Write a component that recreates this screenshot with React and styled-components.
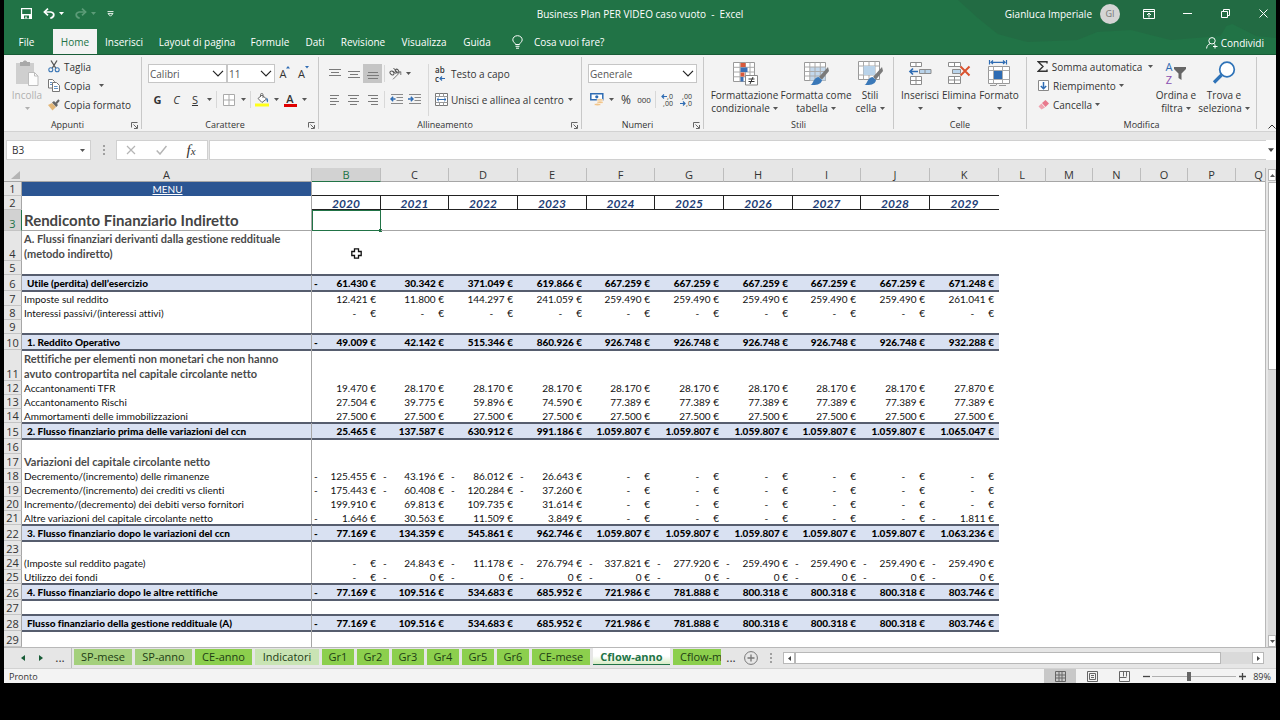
import { useState } from "react";
import styled, { createGlobalStyle, css } from "styled-components";

const yearLabels = ["2020", "2021", "2022", "2023", "2024", "2025", "2026", "2027", "2028", "2029"];

const letters = ["A", "B", "C", "D", "E", "F", "G", "H", "I", "J", "K", "L", "M", "N", "O", "P", "Q"];

const colWidths = [18, 290, 69, 68, 69, 69, 68, 69, 69, 68, 69, 69, 47, 47, 48, 47, 48];

// a leading "-" goes to the left edge of the cell, "z" is an empty amount
const rows = [
  { n: 1, h: 14, kind: "menu", label: "MENU" },
  { n: 2, h: 14, kind: "years" },
  { n: 3, h: 21, kind: "title", label: "Rendiconto Finanziario Indiretto" },
  { n: 4, h: 30, kind: "section", label: "A. Flussi finanziari derivanti dalla gestione reddituale (metodo indiretto)" },
  { n: 5, h: 14 },
  { n: 6, h: 16, kind: "total", label: "Utile (perdita) dell’esercizio", values: ["-61.430", "30.342", "371.049", "619.866", "667.259", "667.259", "667.259", "667.259", "667.259", "671.248"] },
  { n: 7, h: 15, label: "Imposte sul reddito", values: ["12.421", "11.800", "144.297", "241.059", "259.490", "259.490", "259.490", "259.490", "259.490", "261.041"] },
  { n: 8, h: 14, label: "Interessi passivi/(interessi attivi)", values: Array(10).fill("z") },
  { n: 9, h: 14 },
  { n: 10, h: 16, kind: "total", label: "1. Reddito Operativo", values: ["-49.009", "42.142", "515.346", "860.926", "926.748", "926.748", "926.748", "926.748", "926.748", "932.288"] },
  { n: 11, h: 31, kind: "section", label: "Rettifiche per elementi non monetari che non hanno avuto contropartita nel capitale circolante netto" },
  { n: 12, h: 14, label: "Accantonamenti TFR", values: ["19.470", "28.170", "28.170", "28.170", "28.170", "28.170", "28.170", "28.170", "28.170", "27.870"] },
  { n: 13, h: 14, label: "Accantonamento Rischi", values: ["27.504", "39.775", "59.896", "74.590", "77.389", "77.389", "77.389", "77.389", "77.389", "77.389"] },
  { n: 14, h: 14, label: "Ammortamenti delle immobilizzazioni", values: Array(10).fill("27.500") },
  { n: 15, h: 16, kind: "total", label: "2. Flusso finanziario prima delle variazioni del ccn", values: ["25.465", "137.587", "630.912", "991.186", "1.059.807", "1.059.807", "1.059.807", "1.059.807", "1.059.807", "1.065.047"] },
  { n: 16, h: 15 },
  { n: 17, h: 15, kind: "section", label: "Variazioni del capitale circolante netto" },
  { n: 18, h: 14, label: "Decremento/(incremento) delle rimanenze", values: ["-125.455", "-43.196", "-86.012", "-26.643", "z", "z", "z", "z", "z", "z"] },
  { n: 19, h: 14, label: "Decremento/(incremento) dei crediti vs clienti", values: ["-175.443", "-60.408", "-120.284", "-37.260", "z", "z", "z", "z", "z", "z"] },
  { n: 20, h: 14, label: "Incremento/(decremento) dei debiti verso fornitori", values: ["199.910", "69.813", "109.735", "31.614", "z", "z", "z", "z", "z", "z"] },
  { n: 21, h: 14, label: "Altre variazioni del capitale circolante netto", values: ["-1.646", "30.563", "11.509", "3.849", "z", "z", "z", "z", "z", "-1.811"] },
  { n: 22, h: 16, kind: "total", label: "3. Flusso finanziario dopo le variazioni del ccn", values: ["-77.169", "134.359", "545.861", "962.746", "1.059.807", "1.059.807", "1.059.807", "1.059.807", "1.059.807", "1.063.236"] },
  { n: 23, h: 15 },
  { n: 24, h: 14, label: "(Imposte sul reddito pagate)", values: ["z", "-24.843", "-11.178", "-276.794", "-337.821", "-277.920", "-259.490", "-259.490", "-259.490", "-259.490"] },
  { n: 25, h: 14, label: "Utilizzo dei fondi", values: ["z", "-0", "-0", "-0", "-0", "-0", "-0", "-0", "-0", "-0"] },
  { n: 26, h: 16, kind: "total", label: "4. Flusso finanziario dopo le altre rettifiche", values: ["-77.169", "109.516", "534.683", "685.952", "721.986", "781.888", "800.318", "800.318", "800.318", "803.746"] },
  { n: 27, h: 15 },
  { n: 28, h: 16, kind: "total", label: "Flusso finanziario della gestione reddituale (A)", values: ["-77.169", "109.516", "534.683", "685.952", "721.986", "781.888", "800.318", "800.318", "800.318", "803.746"] },
  { n: 29, h: 16 },
];

const sheets = [
  { name: "SP-mese", width: 58, color: "#a4d07c" },
  { name: "SP-anno", width: 57, color: "#a4d07c" },
  { name: "CE-anno", width: 57, color: "#8ccf4d" },
  { name: "Indicatori", width: 64, color: "#c9e4b4" },
  { name: "Gr1", width: 32, color: "#8ccf4d" },
  { name: "Gr2", width: 32, color: "#8ccf4d" },
  { name: "Gr3", width: 32, color: "#8ccf4d" },
  { name: "Gr4", width: 32, color: "#8ccf4d" },
  { name: "Gr5", width: 32, color: "#8ccf4d" },
  { name: "Gr6", width: 32, color: "#8ccf4d" },
  { name: "CE-mese", width: 58, color: "#8ccf4d" },
  { name: "Cflow-anno", width: 77, color: "#ffffff" },
  { name: "Cflow-m", width: 48, color: "#8ccf4d" },
];

const menuTabs = [
  { name: "File", width: 45 },
  { name: "Home", width: 44 },
  { name: "Inserisci", width: 54 },
  { name: "Layout di pagina", width: 92 },
  { name: "Formule", width: 54 },
  { name: "Dati", width: 36 },
  { name: "Revisione", width: 60 },
  { name: "Visualizza", width: 62 },
  { name: "Guida", width: 44 },
];

/* ---------- icons ---------- */

const Svg = ({ w = 14, h = 14, box, children }) => (
  <svg width={w} height={h} viewBox={box || `0 0 ${w} ${h}`} fill="none" aria-hidden="true">
    {children}
  </svg>
);

const Caret = ({ color = "#555" }) => (
  <Svg w={5} h={3}><path d="M0 0h5L2.500 3z" fill={color} /></Svg>
);

const Chevron = () => (
  <Svg w={12} h={7}><path d="M1 .8l5 5 5-5" stroke="#222" strokeWidth="1.2" /></Svg>
);

const Launcher = () => (
  <Svg w={7} h={7}>
    <path d="M.5 5.500v-5h6" stroke="#666" />
    <path d="M2.500 2.500L6 6M6.500 3v3.500H3" stroke="#666" />
  </Svg>
);

const SaveIcon = () => (
  <Svg w={11} h={11}>
    <path d="M.6.6h9.800v9.800H.6z" stroke="#fff" strokeWidth="1.2" />
    <path d="M.6 6h9.800v4.400H.6z" fill="#fff" />
    <path d="M3 7.500h5v3H3z" fill="#217346" />
    <path d="M4.300 8.500h1.400v2H4.300z" fill="#fff" />
  </Svg>
);

const UndoIcon = ({ flip, color }) => (
  <Svg w={12} h={11}>
    <g transform={flip ? "matrix(-1 0 0 1 12 0)" : undefined}>
      <path d="M1.500 4h6.200c4.200.6 4.200 5-.4 6.200" stroke={color} strokeWidth="1.700" />
      <path d="M5 .6L1.400 4 5 7.400" stroke={color} strokeWidth="1.700" />
    </g>
  </Svg>
);

const CustomizeIcon = () => (
  <Svg w={7} h={6}><path d="M.5.6h6M1 2.600h5L3.500 5.200z" stroke="#fff" strokeWidth=".9" /></Svg>
);

const BulbIcon = () => (
  <Svg w={11} h={14}>
    <path d="M3.500 9.500C3.400 8 .8 7 .8 4.900.8 2.500 2.800.7 5.500.7s4.700 1.800 4.700 4.200c0 2.100-2.600 3.100-2.700 4.600z" stroke="#fff" />
    <path d="M3.500 11.300h4M4 13.200h3" stroke="#fff" />
  </Svg>
);

const RibbonOptionsIcon = () => (
  <Svg w={12} h={10}>
    <path d="M.5.5h11v9H.5zM.5 2.500h11M6 8.500V4.300M4 6l2-2 2 2" stroke="#fff" />
  </Svg>
);

const RestoreIcon = () => (
  <Svg w={9} h={9}><path d="M.5 2.500h6v6h-6zM2.500 2.500v-2h6v6h-2" stroke="#fff" /></Svg>
);

const CloseIcon = () => (
  <Svg w={9} h={9}><path d="M.5.5l8 8M8.500.5l-8 8" stroke="#fff" /></Svg>
);

const PersonIcon = () => (
  <Svg w={12} h={12}>
    <circle cx="6" cy="3.800" r="3.200" stroke="#fff" />
    <path d="M.6 11.500c.2-2.600 1.500-4.200 3.600-4.800M7.800 6.700l1 .5M9 7.500v4M7 9.500h4.500" stroke="#fff" />
  </Svg>
);

const PasteIcon = () => (
  <Svg w={24} h={27}>
    <path d="M1 3h18v21H1z" fill="#cfcfcf" />
    <path d="M5 2h3c0-2 4-2 4 0h3v4H5z" fill="#a9a9a9" />
    <path d="M13.500 12.500h6l3.500 3.500v9.500h-9.500z" fill="#fdfdfd" stroke="#bdbdbd" />
    <path d="M19.500 12.500V16H23" stroke="#bdbdbd" />
  </Svg>
);

const CutIcon = () => (
  <Svg w={12} h={13}>
    <path d="M3 .5l5 8M9 .5l-5 8" stroke="#555" strokeWidth="1.300" />
    <circle cx="2.800" cy="9.800" r="2" stroke="#3a76b5" strokeWidth="1.100" />
    <circle cx="9.200" cy="9.800" r="2" stroke="#3a76b5" strokeWidth="1.100" />
  </Svg>
);

const CopyIcon = () => (
  <Svg w={12} h={13}>
    <path d="M.5.5h4l2 2v6.500h-6z" fill="#fff" stroke="#777" />
    <path d="M4.500 3.500h4l3 3v6h-7z" fill="#fff" stroke="#777" />
    <path d="M6 7.500h3.500M6 9.500h4M2 3.500h2M2 5.500h2" stroke="#3a76b5" strokeWidth=".8" />
  </Svg>
);

const BrushIcon = () => (
  <Svg w={12} h={12}>
    <path d="M0 6l4-2 4 4-3.500 3.500z" fill="#e3b778" />
    <path d="M4 3.500L6 2l4 4-1.700 2z" fill="#666" />
    <path d="M8 4.500L11 1" stroke="#666" strokeWidth="2" />
  </Svg>
);

const SizeMark = ({ down }) => (
  <Svg w={4} h={3}><path d={down ? "M0 0h4L2 2.500z" : "M0 2.500h4L2 0z"} fill="#2f6cb3" /></Svg>
);

const BordersIcon = () => (
  <Svg w={12} h={12}>
    <path d="M.5.5h11v11H.5z" fill="#fff" stroke="#aaa" />
    <path d="M6 0v12M0 6h12" stroke="#aaa" />
  </Svg>
);

const FillIcon = () => (
  <Svg w={14} h={14}>
    <path d="M3 5.500l4-3.500 4.500 4L7 9.500z" fill="#fff" stroke="#666" />
    <path d="M5.500 4V1.500c0-1.500 2.500-1.500 2.500 0V5" stroke="#666" strokeWidth=".9" />
    <path d="M11.500 4.500c1.700 1 2 3 1.200 5C11.500 9 11.200 7 11.500 4.500z" fill="#3a76b5" />
    <path d="M0 10.500h14v3H0z" fill="#ffff1a" />
  </Svg>
);

const FontColorBar = () => (
  <Svg w={13} h={3}><path d="M0 0h13v3H0z" fill="#e00000" /></Svg>
);

const Lines = ({ spans }) => (
  <Svg w={12} h={12}>
    {spans.map(([x, y, w]) => <path key={y} d={`M${x} ${y}.5h${w}`} stroke="#7a7a7a" />)}
  </Svg>
);

const OrientIcon = () => (
  <Svg w={13} h={13}>
    <ellipse cx="3" cy="6" rx="1.700" ry="2.200" transform="rotate(-45 3 6)" stroke="#555" />
    <path d="M4 3.800l3 3M4.500 1l4 4.500" stroke="#555" />
    <ellipse cx="8" cy="4" rx="1.500" ry="2" transform="rotate(-45 8 4)" stroke="#555" />
    <path d="M4 12.300l7.500-7.500M8.500 4.800h3.300v3.200" stroke="#777" />
  </Svg>
);

const IndentIcon = ({ right }) => (
  <Svg w={13} h={11}>
    <path d="M1 .5h12M6.500 3.500H13M6.500 6.500H13M1 9.500h12" stroke="#8a8a8a" />
    {right
      ? <path d="M0 5h4.500M2.800 2.800L5 5 2.800 7.200" stroke="#2f6cb3" strokeWidth="1.400" />
      : <path d="M1 5h4.500M3.200 2.800L1 5l2.200 2.200" stroke="#2f6cb3" strokeWidth="1.400" />}
  </Svg>
);

const MergeIcon = () => (
  <Svg w={13} h={13}>
    <path d="M.5.5h12v12H.5z" fill="#fff" stroke="#777" />
    <path d="M.5 3.500h12M.5 9.500h12M4.500.5v3M8.500.5v3M4.500 9.500v3M8.500 9.500v3" stroke="#999" />
    <path d="M2 6.500h9M3.800 4.800L2 6.500l1.800 1.700M9.200 4.800L11 6.500 9.200 8.200" stroke="#2f6cb3" />
  </Svg>
);

const CurrencyIcon = () => (
  <Svg w={14} h={13}>
    <path d="M.8.8h12v6H.8z" fill="#fff" stroke="#2f6cb3" strokeWidth="1.500" />
    <circle cx="6.800" cy="3.800" r="1.600" fill="#2f6cb3" />
    <ellipse cx="10" cy="7" rx="3.200" ry="1.300" fill="#f0c48a" stroke="#fff" strokeWidth=".5" />
    <ellipse cx="10" cy="9.300" rx="3.200" ry="1.300" fill="#f0c48a" stroke="#fff" strokeWidth=".5" />
    <ellipse cx="7.500" cy="11.500" rx="3.200" ry="1.300" fill="#f0c48a" stroke="#fff" strokeWidth=".5" />
  </Svg>
);

const ArrowMini = ({ right }) => (
  <Svg w={6} h={5}>
    <path d={right ? "M0 2.500h5M3 .5l2 2-2 2" : "M6 2.500H1M3 .5l-2 2 2 2"} stroke="#2f6cb3" strokeWidth="1.200" />
  </Svg>
);

const CondIcon = () => (
  <Svg w={26} h={25}>
    <path d="M1.500 1.500h21v19h-21z" fill="#fff" stroke="#999" />
    <path d="M1.500 6.300h21M1.500 11h21M1.500 15.800h21M8 1.500v19M13.500 1.500v19M18 1.500v19" stroke="#aaa" />
    <path d="M8.500 2h5v4h-5zM8.500 11.500h4v4h-4z" fill="#d9583b" />
    <path d="M8.500 6.500h7v4.500h-7z" fill="#3a6fb5" />
    <path d="M8.500 16h3v4.500h-3z" fill="#3a6fb5" />
    <path d="M13.500 14.500h12v9.500h-12z" fill="#fff" stroke="#888" />
    <path d="M16.500 18h6M16.500 20.500h6M21 16l-3 7" stroke="#333" />
  </Svg>
);

const BrushBig = () => (
  <>
    <path d="M25 6l-9 10 3 2.500L26 10z" fill="#7a7a7a" />
    <path d="M15.500 16l3.500 3c-.5 4-5 5.500-11.500 5 3-1 2.500-7 8-8z" fill="#3a78b8" />
  </>
);

const TableIcon = () => (
  <Svg w={26} h={25}>
    <path d="M1.500 1.500h21v18h-21z" fill="#fff" stroke="#999" />
    <path d="M7 6h15.500v13.500H7z" fill="#c3d8ec" />
    <path d="M1.500 6h21M1.500 10.500h21M1.500 15h21M6.800 1.500v18M12 1.500v18M17.300 1.500v18" stroke="#aaa" />
    <BrushBig />
  </Svg>
);

const StylesIcon = () => (
  <Svg w={26} h={25}>
    <path d="M1.500.5h21v18h-21z" fill="#fff" stroke="#999" />
    <path d="M1.500 5h21M1.500 14h21M6.500.5v18M12 .5V5M18 .5v18M12 14v4" stroke="#aaa" />
    <path d="M6.500 5H18v9H6.500z" fill="#b9d3ea" />
    <BrushBig />
  </Svg>
);

const InsertIcon = () => (
  <Svg w={24} h={25}>
    <path d="M2.500 1.500h11v4h-11zM8 1.500v4M2.500 15.500h11v8h-11zM8 15.500v8M2.500 19.500h11" fill="#fff" stroke="#8c8c8c" />
    <path d="M11.500 8.500h11.500v4H11.500zM17 8.500v4" fill="#b9d3ea" stroke="#8c8c8c" />
    <path d="M10 10.500H2M5 7.500l-3 3 3 3" stroke="#2f6cb3" strokeWidth="1.700" />
  </Svg>
);

const DeleteIcon = () => (
  <Svg w={24} h={25}>
    <path d="M1.500 1.500h12v4h-12zM7.500 1.500v4M1.500 15.500h12v7h-12zM7.500 15.500v7M1.500 19h12" fill="#fff" stroke="#8c8c8c" />
    <path d="M5.500 8.500h8v4h-8z" fill="#b9d3ea" stroke="#8c8c8c" />
    <path d="M13.500 5.500l9 9M22.500 5.500l-9 9" stroke="#d9532f" strokeWidth="2" />
  </Svg>
);

const FormatIcon = () => (
  <Svg w={24} h={26}>
    <path d="M2.500 0v4.500M19.500 0v4.500M3.500 2.300h15M6 .5L4 2.300 6 4M16 .5l2 1.800L16 4" stroke="#2f6cb3" strokeWidth="1.200" />
    <path d="M1.500 6.500h21v17h-21z" fill="#fff" stroke="#999" />
    <path d="M1.500 10.500h21M1.500 19.500h21M6.500 6.500v17M15.500 6.500v17" stroke="#aaa" />
    <path d="M7 11h8v8H7z" fill="#2f6cb3" />
    <path d="M3 25.500h6l1-2M12 25.500h7" stroke="#999" />
  </Svg>
);

const SumIcon = () => (
  <Svg w={11} h={11}><path d="M10 2.500V.8H1.200L6 5.500 1.200 10.200H10V8.500" stroke="#333" strokeWidth="1.400" /></Svg>
);

const FillDownIcon = () => (
  <Svg w={11} h={11}>
    <path d="M.5.5h10v10H.5z" fill="#fff" stroke="#888" />
    <path d="M5.500 2v6.500M2.800 6l2.700 2.700L8.200 6" stroke="#2f6cb3" strokeWidth="1.500" />
  </Svg>
);

const EraserIcon = () => (
  <Svg w={11} h={10}>
    <path d="M4 3L7.500 0 11 3.500 7.500 7z" fill="#e8798d" />
    <path d="M3.400 3.500L.5 6.500 3.500 9.500 7 7.500z" fill="#f0a3b0" />
  </Svg>
);

const FunnelIcon = () => (
  <Svg w={12} h={13}><path d="M0 0h12v2L7.500 6.500V13l-3-2V6.500L0 2z" fill="#666" /></Svg>
);

const SearchIcon = () => (
  <Svg w={24} h={24}>
    <circle cx="15" cy="8.500" r="7.300" fill="#fff" stroke="#2f73b8" strokeWidth="1.700" />
    <path d="M9.500 14L2 21.500" stroke="#2f73b8" strokeWidth="3.200" />
  </Svg>
);

const CellCursor = () => (
  <Svg w={11} h={11}>
    <path d="M3.500.8h4v2.700h2.700v4H7.500v2.700h-4V7.500H.8v-4h2.700z" fill="#fff" stroke="#111" strokeWidth="1.300" />
  </Svg>
);

/* ---------- ribbon pieces ---------- */

const LineButton = ({ icon, children, arrow }) => (
  <SmallButton>
    <IconSlot>{icon}</IconSlot>
    {children}
    {arrow && <Caret />}
  </SmallButton>
);

const Big = ({ icon, lines, arrow, width, muted }) => (
  <BigButton width={width} muted={muted}>
    <BigIcon>{icon}</BigIcon>
    <span>{lines[0]}</span>
    <BigLine>
      {lines[1]}
      {arrow && <Caret color={muted ? "#b0b0b0" : "#555"} />}
    </BigLine>
  </BigButton>
);

const RibbonGroup = ({ title, width, launcher, children }) => (
  <Group width={width}>
    <GroupBody>{children}</GroupBody>
    <GroupFooter>
      <GroupTitle>{title}</GroupTitle>
      {launcher && <LaunchButton aria-label={`Opzioni ${title}`}><Launcher /></LaunchButton>}
    </GroupFooter>
  </Group>
);

const Combo = ({ label, value, width }) => (
  <ComboBox width={width}>
    <ComboSelect aria-label={label} defaultValue={value}>
      <option>{value}</option>
    </ComboSelect>
    <Chevron />
  </ComboBox>
);

const Amount = ({ value }) => {
  if (value === "z") {
    return <Money><i /><Dash>-</Dash><span>€</span></Money>;
  }
  const negative = value.startsWith("-");
  return (
    <Money>
      <i>{negative ? "-" : ""}</i>
      <span>{negative ? value.slice(1) : value} €</span>
    </Money>
  );
};

const SheetRow = ({ row }) => {
  const { n, h, kind, label, values } = row;
  return (
    <tr>
      <RowHead scope="row" height={h} active={n === 3}>{n}</RowHead>
      <LabelCell kind={kind}>
        {kind === "menu" ? <MenuLink href="#menu">{label}</MenuLink> : label}
      </LabelCell>
      {yearLabels.map((year, i) => (
        <Cell key={year} kind={kind} frozen={n === 3} selected={n === 3 && i === 0} last={i === 9}>
          {kind === "years" && year}
          {values && <Amount value={values[i]} />}
          {n === 4 && i === 0 && <CursorBox><CellCursor /></CursorBox>}
        </Cell>
      ))}
      <Cell colSpan={6} frozen={n === 3} />
    </tr>
  );
};

function App() {
  const [zoom, setZoom] = useState(44);
  const [sheet, setSheet] = useState("Cflow-anno");
  const [formula, setFormula] = useState("");

  return (
    <>
      <GlobalStyle />
      <Window>
        <TopArea>
          <Backdrop viewBox="0 0 320 54" preserveAspectRatio="none" aria-hidden="true">
            <path d="M0 0h320v38l-20-2-24-12-6 2-6 10-50 4-40-10-34 2-20 8-50 2-30-8-20-16z" fill="#24643f" opacity=".5" />
          </Backdrop>
          <TitleBar>
            <QuickAccess>
              <BarButton aria-label="Salva"><SaveIcon /></BarButton>
              <BarButton aria-label="Annulla"><UndoIcon color="#fff" /><Caret color="#fff" /></BarButton>
              <BarButton aria-label="Ripristina"><UndoIcon flip color="#5c9c78" /><Caret color="#5c9c78" /></BarButton>
              <BarButton aria-label="Personalizza"><CustomizeIcon /></BarButton>
            </QuickAccess>
            <DocTitle>Business Plan PER VIDEO caso vuoto &nbsp;- &nbsp;Excel</DocTitle>
            <WindowTools>
              <span>Gianluca Imperiale</span>
              <Avatar>GI</Avatar>
              <WinButton aria-label="Opzioni barra multifunzione"><RibbonOptionsIcon /></WinButton>
              <WinButton aria-label="Riduci"><Svg w={9} h={9}><path d="M0 4.500h9" stroke="#fff" /></Svg></WinButton>
              <WinButton aria-label="Ripristina finestra"><RestoreIcon /></WinButton>
              <WinButton aria-label="Chiudi"><CloseIcon /></WinButton>
            </WindowTools>
          </TitleBar>
          <MenuBar>
            {menuTabs.map((tab) => (
              <MenuTab key={tab.name} width={tab.width} active={tab.name === "Home"}>{tab.name}</MenuTab>
            ))}
            <TellMe><BulbIcon />Cosa vuoi fare?</TellMe>
            <Share><PersonIcon />Condividi</Share>
          </MenuBar>
        </TopArea>

        <Ribbon>
          <RibbonGroup title="Appunti" width={138} launcher>
            <Big icon={<PasteIcon />} lines={["Incolla", ""]} width={34} arrow muted />
            <Stack>
              <LineButton icon={<CutIcon />}>Taglia</LineButton>
              <LineButton icon={<CopyIcon />} arrow>Copia&nbsp;&nbsp;</LineButton>
              <LineButton icon={<BrushIcon />}>Copia formato</LineButton>
            </Stack>
          </RibbonGroup>

          <RibbonGroup title="Carattere" width={177} launcher>
            <ToolRows>
              <ToolRow>
                <Combo label="Tipo di carattere" value="Calibri" width={79} />
                <Combo label="Dimensione" value="11" width={48} />
                <Tool width={20} aria-label="Aumenta"><Glyph>A<SizeMark /></Glyph></Tool>
                <Tool width={17} aria-label="Riduci"><Glyph>A<SizeMark down /></Glyph></Tool>
              </ToolRow>
              <ToolRow>
                <Tool width={19}><b>G</b></Tool>
                <Tool width={19}><em>C</em></Tool>
                <Tool width={18}><u>S</u></Tool>
                <Tool width={10} aria-label="Sottolineatura"><Caret /></Tool>
                <Divider />
                <Tool width={19} aria-label="Bordi"><BordersIcon /></Tool>
                <Tool width={10} aria-label="Altri bordi"><Caret /></Tool>
                <Divider />
                <Tool width={18} aria-label="Riempi"><FillIcon /></Tool>
                <Tool width={10} aria-label="Altri riempimenti"><Caret /></Tool>
                <Tool width={18}><ColorA>A<FontColorBar /></ColorA></Tool>
                <Tool width={10} aria-label="Altri colori"><Caret /></Tool>
              </ToolRow>
            </ToolRows>
          </RibbonGroup>

          <RibbonGroup title="Allineamento" width={263} launcher>
            <ToolRows>
              <ToolRow>
                <Tool width={19} aria-label="In alto"><Lines spans={[[0, 1, 12], [2, 4, 8], [0, 7, 12]]} /></Tool>
                <Tool width={19} aria-label="Al centro"><Lines spans={[[0, 3, 12], [2, 6, 8], [0, 9, 12]]} /></Tool>
                <Tool width={19} pressed aria-label="In basso"><Lines spans={[[1, 4, 10], [0, 7, 12], [1, 10, 10]]} /></Tool>
                <Divider />
                <Tool width={16} aria-label="Orientamento"><OrientIcon /></Tool>
                <Tool width={10} aria-label="Altri orientamenti"><Caret /></Tool>
              </ToolRow>
              <ToolRow>
                <Tool width={19} aria-label="A sinistra"><Lines spans={[[1, 1, 9], [1, 4, 7], [1, 7, 9], [1, 10, 6]]} /></Tool>
                <Tool width={19} aria-label="Centra"><Lines spans={[[0, 1, 11], [2, 4, 7], [0, 7, 11], [2, 10, 7]]} /></Tool>
                <Tool width={19} aria-label="A destra"><Lines spans={[[1, 1, 10], [4, 4, 7], [1, 7, 10], [4, 10, 7]]} /></Tool>
                <Divider />
                <Tool width={18} aria-label="Riduci rientro"><IndentIcon /></Tool>
                <Tool width={18} aria-label="Aumenta rientro"><IndentIcon right /></Tool>
              </ToolRow>
            </ToolRows>
            <ToolRows ruled>
              <ToolRow>
                <TextTool>
                  <WrapGlyph><span>ab</span><span>c<ArrowMini /></span></WrapGlyph>
                  Testo a capo
                </TextTool>
              </ToolRow>
              <ToolRow>
                <TextTool><MergeIcon />Unisci e allinea al centro</TextTool>
                <Tool width={14} aria-label="Altre unioni"><Caret /></Tool>
              </ToolRow>
            </ToolRows>
          </RibbonGroup>

          <RibbonGroup title="Numeri" width={122} launcher>
            <ToolRows>
              <ToolRow>
                <Combo label="Formato numero" value="Generale" width={109} />
              </ToolRow>
              <ToolRow>
                <Tool width={18} aria-label="Valuta"><CurrencyIcon /></Tool>
                <Tool width={11} aria-label="Altre valute"><Caret /></Tool>
                <Tool width={18}><Percent>%</Percent></Tool>
                <Tool width={18}><Thousands>000</Thousands></Tool>
                <Divider />
                <Tool width={18}><Decimals><span><ArrowMini />,0</span><span>,00</span></Decimals></Tool>
                <Tool width={20}><Decimals><span>,00</span><span><ArrowMini right />,0</span></Decimals></Tool>
              </ToolRow>
            </ToolRows>
          </RibbonGroup>

          <RibbonGroup title="Stili" width={190}>
            <Big icon={<CondIcon />} lines={["Formattazione", "condizionale"]} width={69} arrow />
            <Big icon={<TableIcon />} lines={["Formatta come", "tabella"]} width={74} arrow />
            <Big icon={<StylesIcon />} lines={["Stili", "cella"]} width={34} arrow />
          </RibbonGroup>

          <RibbonGroup title="Celle" width={133}>
            <Big icon={<InsertIcon />} lines={["Inserisci", ""]} width={40} arrow />
            <Big icon={<DeleteIcon />} lines={["Elimina", ""]} width={38} arrow />
            <Big icon={<FormatIcon />} lines={["Formato", ""]} width={42} arrow />
          </RibbonGroup>

          <RibbonGroup title="Modifica" width={230}>
            <Stack wide>
              <LineButton icon={<SumIcon />} arrow>Somma automatica&nbsp;</LineButton>
              <LineButton icon={<FillDownIcon />} arrow>Riempimento</LineButton>
              <LineButton icon={<EraserIcon />} arrow>Cancella</LineButton>
            </Stack>
            <Big
              icon={<SortGlyph><AzLetters><span>A</span><span>Z</span></AzLetters><FunnelIcon /></SortGlyph>}
              lines={["Ordina e", "filtra"]}
              width={46}
              arrow
            />
            <Big icon={<SearchIcon />} lines={["Trova e", "seleziona"]} width={50} arrow />
          </RibbonGroup>
          <Collapse aria-label="Comprimi"><Svg w={8} h={5}><path d="M.5 4.500L4 1l3.500 3.500" stroke="#333" /></Svg></Collapse>
        </Ribbon>

        <FormulaBar>
          <NameBox>
            <NameInput aria-label="Casella nome" defaultValue="B3" />
            <Caret />
          </NameBox>
          <Dots><i /><i /><i /></Dots>
          <FormulaTools>
            <Tool width={28} aria-label="Annulla voce"><Svg w={10} h={10}><path d="M1 1l8 8M9 1l-8 8" stroke="#b5b5b5" strokeWidth="1.200" /></Svg></Tool>
            <Tool width={32} aria-label="Conferma"><Svg w={11} h={10}><path d="M.7 5.500L4 9l6.500-8" stroke="#b5b5b5" strokeWidth="1.500" /></Svg></Tool>
            <Tool width={28}><Fx>f<small>x</small></Fx></Tool>
          </FormulaTools>
          <FormulaInput aria-label="Formula" value={formula} onChange={(e) => setFormula(e.target.value)} />
          <Expand aria-label="Espandi"><Svg w={6} h={4}><path d="M0 .3h6L3 4z" fill="#444" /></Svg></Expand>
        </FormulaBar>

        <SheetArea>
          <Grid>
            <colgroup>
              {colWidths.map((w, i) => <Col key={i} width={w} />)}
              <col />
            </colgroup>
            <thead>
              <tr>
                <Corner><Svg w={9} h={8}><path d="M9 0v8H0z" fill="#b4b4b4" /></Svg></Corner>
                {letters.map((l) => <ColHead key={l} scope="col" active={l === "B"} edge={l === "Q"}>{l}</ColHead>)}
              </tr>
            </thead>
            <tbody>
              {rows.map((row) => <SheetRow key={row.n} row={row} />)}
            </tbody>
          </Grid>
          <VScroll>
            <ScrollButton aria-label="Su"><Svg w={5} h={3}><path d="M0 3h5L2.500 0z" fill="#555" /></Svg></ScrollButton>
            <VThumb />
            <VTrack />
            <ScrollButton aria-label="Giù"><Caret /></ScrollButton>
          </VScroll>
        </SheetArea>

        <TabBar>
          <NavArrow aria-label="Precedente"><Svg w={4} h={6}><path d="M4 0v6L0 3z" fill="#185c37" /></Svg></NavArrow>
          <NavArrow aria-label="Successivo"><Svg w={4} h={6}><path d="M0 0v6l4-3z" fill="#185c37" /></Svg></NavArrow>
          <Ellipsis>...</Ellipsis>
          <Tabs>
            {sheets.map((s) => (
              <SheetTab key={s.name} width={s.width} color={s.color} active={s.name === sheet} onClick={() => setSheet(s.name)}>
                {s.name}
              </SheetTab>
            ))}
          </Tabs>
          <Ellipsis>...</Ellipsis>
          <AddSheet aria-label="Nuovo foglio">
            <Svg w={14} h={14}><circle cx="7" cy="7" r="6.400" stroke="#777" /><path d="M7 3.500v7M3.500 7h7" stroke="#777" strokeWidth="1.300" /></Svg>
          </AddSheet>
          <Dots><i /><i /><i /></Dots>
          <HScroll>
            <ScrollButton wide aria-label="Sinistra"><Svg w={3} h={5}><path d="M3 0v5L0 2.500z" fill="#444" /></Svg></ScrollButton>
            <HThumb />
            <HTrack />
            <ScrollButton wide aria-label="Destra"><Svg w={3} h={5}><path d="M0 0v5l3-2.500z" fill="#444" /></Svg></ScrollButton>
          </HScroll>
        </TabBar>

        <StatusBar>
          <Ready>Pronto</Ready>
          <ViewButton pressed aria-label="Normale"><Svg w={11} h={11}><path d="M.5.5h10v10H.5zM4 .5v10M7 .5v10M.5 4h10M.5 7h10" stroke="#666" /></Svg></ViewButton>
          <ViewButton aria-label="Layout di pagina"><Svg w={11} h={11}><path d="M.5.5h10v10H.5zM2.500 2.500h6v6h-6zM4 4.500h3M4 6.500h3" stroke="#666" /></Svg></ViewButton>
          <ViewButton aria-label="Anteprima interruzioni"><Svg w={11} h={11}><path d="M.5.5h10v10H.5zM4.500.5v5M7.500.5v5M.5 6.500h7" stroke="#666" /></Svg></ViewButton>
          <ZoomButton aria-label="Riduci zoom"><Svg w={7} h={7}><path d="M0 3.500h7" stroke="#444" strokeWidth="1.300" /></Svg></ZoomButton>
          <ZoomRange type="range" aria-label="Zoom" min="0" max="100" value={zoom} onChange={(e) => setZoom(Number(e.target.value))} />
          <ZoomButton aria-label="Aumenta zoom"><Svg w={7} h={7}><path d="M0 3.500h7M3.500 0v7" stroke="#444" strokeWidth="1.300" /></Svg></ZoomButton>
          <ZoomLabel>89%</ZoomLabel>
        </StatusBar>
      </Window>
    </>
  );
}

export default App;

const uiFont = `"Open Sans", "Noto Sans", sans-serif`;
const cellFont = `Lato, "Open Sans", sans-serif`;
const lineGrey = "#a6a6a6";

const noForward = (...names) => ({ shouldForwardProp: (prop) => !names.includes(prop) });

const GlobalStyle = createGlobalStyle`
  * {
    box-sizing: border-box;
  }
  body {
    margin: 0;
    background: #000;
    color: #333;
    font-family: ${uiFont};
    font-size: 10px;
  }
  button, input, select {
    font: inherit;
    color: inherit;
    border: none;
    background: none;
    padding: 0;
    margin: 0;
    outline: none;
    border-radius: 0;
  }
  svg {
    display: block;
    flex: none;
  }
`;

const Window = styled.div`
  margin: 0 4px;
  background: #e6e6e6;
  overflow: hidden;
`;

/* title and menu */

const TopArea = styled.header`
  position: relative;
  background: #217346;
  color: #fff;
  border-bottom: 1px solid #185c37;
`;

const Backdrop = styled.svg`
  position: absolute;
  top: 0;
  right: 0;
  width: 25%;
  height: 100%;
`;

const TitleBar = styled.div`
  position: relative;
  display: grid;
  grid-template-columns: 1fr auto 1fr;
  align-items: center;
  height: 27px;
`;

const QuickAccess = styled.div`
  display: flex;
  align-items: center;
  gap: 11px;
  padding-left: 17px;
`;

const BarButton = styled.button`
  display: flex;
  align-items: center;
  gap: 4px;
`;

const DocTitle = styled.div`
  white-space: nowrap;
`;

const WindowTools = styled.div`
  display: flex;
  align-items: center;
  justify-content: flex-end;
`;

const Avatar = styled.span`
  display: flex;
  align-items: center;
  justify-content: center;
  width: 20px;
  height: 20px;
  margin: 0 4px 0 8px;
  border-radius: 50%;
  background: #d4d4d4;
  color: #777;
  font-size: 9px;
`;

const WinButton = styled.button`
  display: flex;
  align-items: center;
  justify-content: center;
  width: 26px;
  height: 20px;
  margin-left: 12px;
`;

const MenuBar = styled.nav`
  position: relative;
  display: flex;
  align-items: flex-end;
  height: 27px;
`;

const MenuTab = styled.button.withConfig(noForward("width", "active"))`
  width: ${(props) => props.width}px;
  height: 25px;
  white-space: nowrap;
  text-align: center;
  background: ${(props) => (props.active ? "#f3f3f3" : "transparent")};
  color: ${(props) => (props.active ? "#217346" : "#fff")};
  margin-left: ${(props) => (props.active ? "4px" : 0)};
`;

const TellMe = styled.button`
  display: flex;
  align-items: center;
  gap: 11px;
  height: 25px;
  margin-left: 13px;
  color: #fff;
  white-space: nowrap;
`;

const Share = styled.button`
  display: flex;
  align-items: center;
  gap: 3px;
  height: 23px;
  margin-left: auto;
  margin-right: 12px;
  color: #fff;
`;

/* ribbon */

const Ribbon = styled.div`
  display: flex;
  height: 77px;
  padding-top: 2px;
  background: #f3f3f3;
  border-bottom: 1px solid #d2d2d2;
`;

const Group = styled.section.withConfig(noForward("width"))`
  display: flex;
  flex-direction: column;
  width: ${(props) => props.width}px;
  height: 72px;
  border-right: 1px solid #c8c8c8;
`;

const GroupBody = styled.div`
  display: flex;
  flex: 1;
  padding-left: 6px;
`;

const GroupFooter = styled.div`
  display: flex;
  align-items: center;
  height: 12px;
  margin-bottom: -2px;
`;

const GroupTitle = styled.div`
  flex: 1;
  text-align: center;
  font-size: 9px;
  line-height: 12px;
`;

const LaunchButton = styled.button`
  padding-right: 3px;
`;

const Stack = styled.div.withConfig(noForward("wide"))`
  display: flex;
  flex-direction: column;
  width: ${(props) => (props.wide ? "120px" : "auto")};
  padding-left: 3px;
`;

const IconSlot = styled.span`
  display: flex;
  justify-content: center;
  width: 14px;
`;

const SmallButton = styled.button`
  display: flex;
  align-items: center;
  gap: 3px;
  height: 19px;
  white-space: nowrap;
`;

const BigButton = styled.button.withConfig(noForward("width", "muted"))`
  display: flex;
  flex-direction: column;
  align-items: center;
  flex: none;
  width: ${(props) => props.width}px;
  height: 58px;
  white-space: nowrap;
  line-height: 13px;
  color: ${(props) => (props.muted ? "#b0b0b0" : "#333")};
`;

const BigIcon = styled.span`
  display: flex;
  align-items: center;
  height: 32px;
`;

const BigLine = styled.span`
  display: flex;
  align-items: center;
  gap: 3px;
  min-height: 13px;
`;

const ToolRows = styled.div.withConfig(noForward("ruled"))`
  display: flex;
  flex-direction: column;
  gap: 7px;
  height: 52px;
  margin-top: 7px;
  ${(props) => props.ruled && css`
    margin-left: 5px;
    padding-left: 6px;
    border-left: 1px solid #d8d8d8;
  `}
`;

const ToolRow = styled.div`
  display: flex;
  align-items: center;
  height: 19px;
`;

const Tool = styled.button.withConfig(noForward("width", "pressed"))`
  display: flex;
  align-items: center;
  justify-content: center;
  width: ${(props) => props.width}px;
  height: 19px;
  flex: none;
  font-size: 11px;
  background: ${(props) => (props.pressed ? "#c5c5c5" : "transparent")};
`;

const TextTool = styled.button`
  display: flex;
  align-items: center;
  gap: 3px;
  white-space: nowrap;
`;

const Divider = styled.i`
  width: 1px;
  height: 17px;
  margin: 0 2px;
  background: #d8d8d8;
`;

const Glyph = styled.span`
  display: flex;
  font-size: 11px;
`;

const ColorA = styled.span`
  display: flex;
  flex-direction: column;
  align-items: center;
  font-weight: 600;
  line-height: 11px;
`;

const WrapGlyph = styled.span`
  display: flex;
  flex-direction: column;
  width: 13px;
  font-size: 8px;
  line-height: 9px;
  font-weight: 600;

  span {
    display: flex;
    align-items: center;
  }
`;

const Percent = styled.span`
  font-size: 12px;
`;

const Thousands = styled.span`
  font-size: 8px;
`;

const Decimals = styled.span`
  display: flex;
  flex-direction: column;
  align-items: flex-end;
  font-size: 7px;
  line-height: 7px;

  span {
    display: flex;
    align-items: center;
  }
`;

const ComboBox = styled.div.withConfig(noForward("width"))`
  display: flex;
  align-items: center;
  width: ${(props) => props.width}px;
  height: 19px;
  padding-right: 2px;
  background: #fff;
  border: 1px solid #c6c6c6;
`;

const ComboSelect = styled.select`
  flex: 1;
  min-width: 0;
  padding-left: 1px;
  appearance: none;
  color: #555;
  line-height: 16px;
`;

const SortGlyph = styled.span`
  display: flex;
  align-items: center;
  gap: 2px;
`;

const AzLetters = styled.span`
  display: flex;
  flex-direction: column;
  font-size: 11px;
  line-height: 13px;
  color: #2f6cb3;

  span:last-child {
    color: #8a4fb0;
  }
`;

const Collapse = styled.button`
  display: flex;
  align-items: flex-end;
  margin-left: auto;
  height: 72px;
`;

/* formula bar */

const FormulaBar = styled.div`
  display: flex;
  align-items: center;
  height: 36px;
  padding-left: 2px;
`;

const NameBox = styled.div`
  display: flex;
  align-items: center;
  width: 85px;
  height: 20px;
  padding: 0 5px;
  background: #fff;
  border: 1px solid #d0d0d0;
`;

const NameInput = styled.input`
  flex: 1;
  min-width: 0;
`;

const Dots = styled.span`
  display: flex;
  flex-direction: column;
  align-items: center;
  gap: 2px;
  width: 25px;

  i {
    width: 2px;
    height: 2px;
    background: #a0a0a0;
  }
`;

const FormulaTools = styled.div`
  display: flex;
  align-items: center;
  width: 92px;
  height: 20px;
  background: #fff;
  border: 1px solid #d0d0d0;
`;

const Fx = styled.em`
  font-family: "Liberation Serif", serif;
  font-size: 15px;

  small {
    font-size: 11px;
  }
`;

const FormulaInput = styled.input`
  flex: 1;
  min-width: 0;
  height: 20px;
  margin-left: 1px;
  padding: 0 6px;
  background: #fff;
  border: 1px solid #d0d0d0;
  border-right: none;
`;

const Expand = styled.button`
  display: flex;
  align-items: center;
  justify-content: center;
  width: 10px;
  height: 20px;
  background: #fff;
`;

/* sheet */

const SheetArea = styled.main`
  display: flex;
  background: #fff;
  border-bottom: 1px solid #b8b8b8;
`;

const Grid = styled.table`
  flex: 1;
  width: 0;
  table-layout: fixed;
  border-collapse: separate;
  border-spacing: 0;
  font-family: ${cellFont};
  font-size: 10px;
  font-variant-ligatures: none;
  color: #111;

  th, td {
    padding: 0;
  }
`;

const Col = styled.col.withConfig(noForward("width"))`
  width: ${(props) => props.width}px;
`;

const Corner = styled.td`
  height: 14px;
  background: #e6e6e6;
  border-bottom: 1px solid ${lineGrey};

  svg {
    margin-left: 7px;
  }
`;

const ColHead = styled.th.withConfig(noForward("active", "edge"))`
  height: 14px;
  overflow: hidden;
  font-family: ${uiFont};
  font-size: 11px;
  font-weight: 400;
  line-height: 13px;
  background: ${(props) => (props.active ? "#d2d2d2" : "#e6e6e6")};
  color: ${(props) => (props.active ? "#217346" : "#333")};
  border-bottom: 1px solid ${(props) => (props.active ? "#217346" : lineGrey)};
  border-right: 1px solid #bdbdbd;
  ${(props) => props.edge && css`
    border-right: none;
    padding-left: 16px !important;
  `}
`;

const RowHead = styled.th.withConfig(noForward("active", "height"))`
  height: ${(props) => props.height}px;
  vertical-align: bottom;
  font-family: ${uiFont};
  font-size: 11px;
  font-weight: 400;
  line-height: 13px;
  text-align: center;
  background: ${(props) => (props.active ? "#d2d2d2" : "#e6e6e6")};
  color: ${(props) => (props.active ? "#217346" : "#333")};
  border-bottom: 1px solid #c4c4c4;
  border-right: 1px solid ${(props) => (props.active ? "#217346" : lineGrey)};
`;

const totalStyle = css`
  background: #d9e1f2;
  font-weight: 900;
  color: #000;
  box-shadow: 0 -1px #565d6e, 0 1px #565d6e, inset 0 1px #565d6e, inset 0 -1px #565d6e;
`;

const LabelCell = styled.td.withConfig(noForward("kind"))`
  vertical-align: bottom;
  padding-left: 2px !important;
  line-height: 13px;
  white-space: nowrap;
  border-right: 1px solid ${lineGrey};

  ${(props) => props.kind === "menu" && css`
    background: #2b5592;
    text-align: center;
  `}
  ${(props) => props.kind === "title" && css`
    font-size: 15px;
    font-weight: 700;
    line-height: 19px;
    color: #444;
    border-bottom: 1px solid ${lineGrey};
  `}
  ${(props) => props.kind === "section" && css`
    padding-right: 14px !important;
    font-size: 11px;
    font-weight: 700;
    line-height: 15px;
    white-space: normal;
    color: #4a4a4a;
  `}
  ${(props) => props.kind === "total" && css`
    ${totalStyle}
    padding-left: 5px !important;
    vertical-align: middle;
  `}
`;

const MenuLink = styled.a`
  color: #fff;
`;

const Cell = styled.td.withConfig(noForward("kind", "frozen", "selected", "last"))`
  position: relative;
  vertical-align: bottom;
  line-height: 13px;
  ${(props) => props.frozen && css`
    border-bottom: 1px solid ${lineGrey};
  `}
  ${(props) => props.kind === "years" && css`
    text-align: center;
    font-size: 12px;
    font-style: italic;
    font-weight: 700;
    color: #1f3f77;
    box-shadow: 0 -1px #222, inset 0 -1px #222;
    border-right: ${props.last ? "none" : "1px solid #222"};
  `}
  ${(props) => props.kind === "total" && css`
    ${totalStyle}
    vertical-align: middle;
  `}
  ${(props) => props.selected && css`
    border: 1px solid #217346;

    &::after {
      content: "";
      position: absolute;
      right: -2px;
      bottom: -2px;
      width: 3px;
      height: 3px;
      background: #217346;
    }
  `}
`;

const Money = styled.div`
  display: flex;
  justify-content: flex-end;
  padding: 0 5px 0 2px;

  i {
    margin-right: auto;
    font-style: normal;
  }
`;

const Dash = styled.span`
  margin-right: 14px;
`;

const CursorBox = styled.div`
  position: absolute;
  left: 39px;
  bottom: 2px;
`;

const VScroll = styled.div`
  display: flex;
  flex-direction: column;
  width: 11px;
  padding: 1px 0 0 2px;
  background: #e6e6e6;
  border-left: 1px solid #b8b8b8;
`;

const ScrollButton = styled.button.withConfig(noForward("wide"))`
  display: flex;
  align-items: center;
  justify-content: center;
  width: ${(props) => (props.wide ? "12px" : "100%")};
  height: 12px;
  background: #fff;
  border: 1px solid #b8b8b8;
`;

const VThumb = styled.div`
  flex: 7;
  margin-top: 1px;
  background: #fff;
  border: 1px solid #b8b8b8;
  border-right: none;
`;

const VTrack = styled.div`
  flex: 10;
  background: #dadada;
`;

/* sheet tabs and status */

const TabBar = styled.div`
  display: flex;
  align-items: center;
  height: 20px;
  padding-right: 12px;
`;

const NavArrow = styled.button`
  display: flex;
  justify-content: center;
  width: 18px;

  &:first-child {
    margin-left: 10px;
  }
`;

const Ellipsis = styled.span`
  width: 20px;
  text-align: center;
  font-size: 12px;
  line-height: 12px;
`;

const Tabs = styled.div`
  display: flex;
  gap: 3px;
  height: 20px;
  margin-left: 1px;
  padding-left: 2px;
  border-left: 1px solid #bdbdbd;
`;

const SheetTab = styled.button.withConfig(noForward("width", "color", "active"))`
  display: flex;
  justify-content: center;
  width: ${(props) => props.width}px;
  height: 17px;
  overflow: hidden;
  white-space: nowrap;
  font-size: 11px;
  line-height: 15px;
  color: #1d3d14;
  background: ${(props) => props.color};
  border-top: 1px solid #e6e6e6;

  &:last-child {
    justify-content: flex-start;
    padding-left: 7px;
  }
  ${(props) => props.active && css`
    font-weight: 700;
    line-height: 17px;
    color: #217346;
    background: linear-gradient(#ffffff 50%, #d8ecc6);
    border-top: none;
    border-bottom: 1px solid #217346;
  `}
`;

const AddSheet = styled.button`
  margin-left: 3px;
`;

const HScroll = styled.div`
  display: flex;
  align-items: center;
  flex: 1;
`;

const HThumb = styled.div`
  flex: 1;
  height: 12px;
  background: #fff;
  border: 1px solid #b8b8b8;
`;

const HTrack = styled.div`
  width: 31px;
  height: 12px;
  background: #dadada;
`;

const StatusBar = styled.footer`
  display: flex;
  align-items: center;
  height: 15px;
  padding-left: 5px;
  background: #f3f3f3;
  border-top: 1px solid #d2d2d2;
  font-size: 9px;
`;

const Ready = styled.span`
  flex: 1;
`;

const ViewButton = styled.button.withConfig(noForward("pressed"))`
  display: flex;
  align-items: center;
  justify-content: center;
  width: 32px;
  height: 14px;
  background: ${(props) => (props.pressed ? "#c8c8c8" : "transparent")};
`;

const ZoomButton = styled.button`
  display: flex;
  align-items: center;
  justify-content: center;
  width: 12px;
`;

const ZoomRange = styled.input`
  appearance: none;
  width: 84px;
  height: 9px;
  background: linear-gradient(#b0b0b0, #b0b0b0) center / 100% 1px no-repeat;

  &::-webkit-slider-thumb {
    appearance: none;
    width: 4px;
    height: 9px;
    background: #666;
  }
`;

const ZoomLabel = styled.span`
  width: 28px;
  text-align: center;
`;
